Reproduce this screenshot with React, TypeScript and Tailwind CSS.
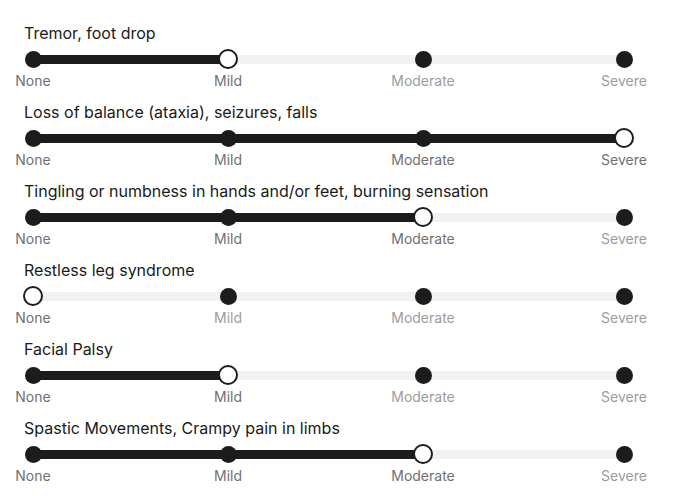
const levels = ["None", "Mild", "Moderate", "Severe"];
const stops = [0, 195, 390, 591];
const spacers = ["w-[175px]", "w-[175px]", "w-[181px]"];

const symptoms = [
  { label: "Tremor, foot drop", value: 1 },
  { label: "Loss of balance (ataxia), seizures, falls", value: 3 },
  { label: "Tingling or numbness in hands and/or feet, burning sensation", value: 2 },
  { label: "Restless leg syndrome", value: 0 },
  { label: "Facial Palsy", value: 1 },
  { label: "Spastic Movements, Crampy pain in limbs", value: 2 },
];

function Stops({ render }: { render: (i: number) => React.ReactNode }) {
  return (
    <div className="flex items-center">
      {levels.map((_, i) => (
        <div key={i} className="flex items-center">
          <div className="w-5 flex justify-center">{render(i)}</div>
          {i < spacers.length && <div className={spacers[i]} />}
        </div>
      ))}
    </div>
  );
}

function SeverityRow({ label, value }: { label: string; value: number }) {
  return (
    <div className="flex flex-col">
      <div className="pl-6 h-5 leading-5 text-[16px] text-[#1a1a1a]">{label}</div>
      <div className="relative ml-[23px] mt-[6px] h-5 flex items-center">
        {/* track behind the knobs */}
        <div className="absolute left-[10px] w-[591px] h-[9px] bg-[#f1f1f1]">
          <div className="h-full bg-[#1c1c1c]" style={{ width: stops[value] }} />
        </div>
        <div className="relative">
          <Stops
            render={(i) =>
              i === value ? (
                <div className="w-5 h-5 shrink-0 rounded-full bg-white border-2 border-[#1c1c1c]" />
              ) : (
                <div className="w-[17px] h-[17px] shrink-0 rounded-full bg-[#1c1c1c]" />
              )
            }
          />
        </div>
      </div>
      <div className="ml-[23px] mt-[3px] h-[18px]">
        <Stops
          render={(i) => (
            <span
              className={`text-[14px] leading-[18px] whitespace-nowrap ${
                i <= value ? "text-[#707070]" : "text-[#9c9c9c]"
              }`}
            >
              {levels[i]}
            </span>
          )}
        />
      </div>
    </div>
  );
}

export default function App() {
  return (
    <div
      className="w-[675px] h-[496px] bg-white pt-[23px] flex flex-col gap-3 overflow-hidden"
      style={{ fontFamily: "Inter, 'Noto Sans', sans-serif" }}
    >
      {symptoms.map((s) => (
        <SeverityRow key={s.label} label={s.label} value={s.value} />
      ))}
    </div>
  );
}
